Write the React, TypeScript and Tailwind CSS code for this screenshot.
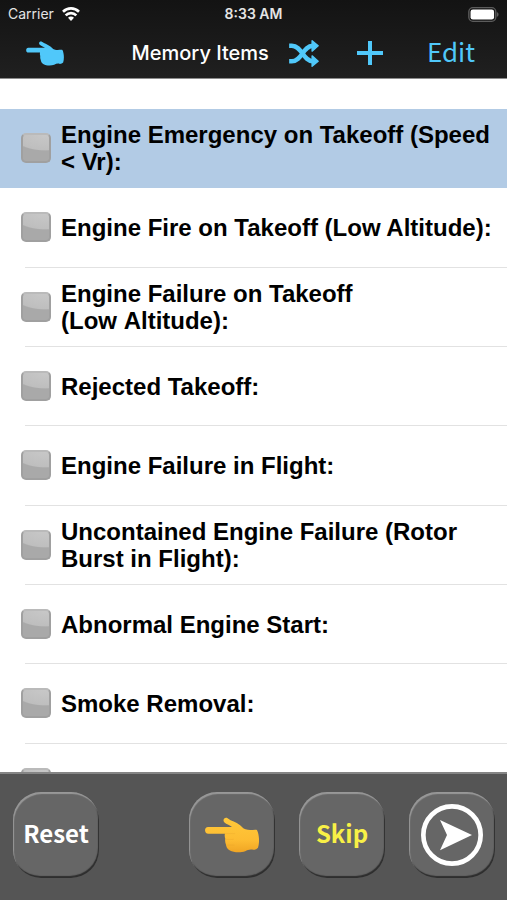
import { useState } from 'react'
import type { ReactNode } from 'react'

interface MemoryItem {
  id: string
  title: string
}

const ITEMS: MemoryItem[] = [
  { id: 'takeoff-emergency', title: 'Engine Emergency on Takeoff (Speed < Vr):' },
  { id: 'takeoff-fire', title: 'Engine Fire on Takeoff (Low Altitude):' },
  { id: 'takeoff-failure', title: 'Engine Failure on Takeoff (Low\u00a0Altitude):' },
  { id: 'rejected', title: 'Rejected Takeoff:' },
  { id: 'failure-flight', title: 'Engine Failure in Flight:' },
  { id: 'rotor-burst', title: 'Uncontained Engine Failure (Rotor Burst in Flight):' },
  { id: 'abnormal-start', title: 'Abnormal Engine Start:' },
  { id: 'smoke', title: 'Smoke Removal:' },
  { id: 'next', title: '' },
]

const TOOL_FONT = "font-['Noto_Sans_CJK_SC','Liberation_Sans',sans-serif]"
const CHECKBOX =
  'size-[30px] flex-none appearance-none rounded-[5px] border-2 border-[#a0a0a0] border-t-[#bababa] bg-[#a9a9a9] bg-[radial-gradient(ellipse_130%_66%_at_85%_-5%,#c8c8c8_0%,#bebebe_94%,transparent_100%)] checked:bg-[#4a90d9]'

function HandIcon({ className, fill, shaded }: { className: string; fill: string; shaded?: boolean }) {
  return (
    <svg viewBox="0 0 160 106" className={className} aria-hidden="true">
      <defs>
        <linearGradient id="hand-shade" x1="0" y1="0" x2="0" y2="1">
          <stop offset="0" stopColor="#ffc83a" />
          <stop offset="0.65" stopColor="#fdbc32" />
          <stop offset="1" stopColor="#f0a524" />
        </linearGradient>
      </defs>
      <path
        fill={fill}
        d="M9 29H80C70 22 56 19 55 11C54 3 61 0 67 3C78 12 92 14 103 23C108 27 112 33 120 36C133 41 145 36 154 38C161 52 162 76 157 91C153 95 149 97 143 97C134 94 127 97 119 101C106 106 84 105 74 99C65 94 63 87 62 81C60 76 59 69 60 64C58 59 58 53 59 49H10C-3 49 -3 29 9 29Z"
      />
      {shaded && (
        <path
          d="M59 49H88M62 66H84M66 83H86"
          fill="none"
          stroke="#e59d28"
          strokeWidth="2"
          strokeLinecap="round"
          opacity="0.4"
        />
      )}
    </svg>
  )
}

function ShuffleIcon() {
  return (
    <svg viewBox="0 0 88 80" className="h-[27px] w-[30px]" aria-hidden="true">
      <path d="M0 17H8C38 17 41 63 70 63M0 63H8C38 63 41 17 70 17" fill="none" stroke="currentColor" strokeWidth="13" />
      <path d="M68 2L86 17L68 33ZM68 47L86 63L68 78Z" fill="currentColor" stroke="currentColor" strokeWidth="4" strokeLinejoin="round" />
    </svg>
  )
}

function StatusBar() {
  return (
    <div className="grid h-7 grid-cols-3 items-center px-2 text-sm text-[#e4e4e4]">
      <div className="flex items-center gap-2">
        <span>Carrier</span>
        <svg viewBox="0 0 54 42" className="h-3.5 w-[18px]" fill="none" stroke="white" strokeWidth="8" aria-label="Wi-Fi">
          <path d="M3 14C17 1 37 1 51 14M11 25C20 16 34 16 43 25" />
          <path d="M18 32C23 27 31 27 36 32L27 42Z" fill="white" stroke="none" />
        </svg>
      </div>
      <div className="text-center font-semibold">8:33 AM</div>
      <svg viewBox="0 0 90 44" className="h-[15px] w-[31px] justify-self-end" aria-label="Battery full">
        <rect x="2" y="2" width="79" height="40" rx="12" fill="none" stroke="#5c5c5c" strokeWidth="4" />
        <rect x="7" y="7" width="69" height="30" rx="7" fill="white" />
        <path d="M84 15C91 18 91 26 84 29Z" fill="#5c5c5c" />
      </svg>
    </div>
  )
}

function ToolButton({ label, onClick, children }: { label: string; onClick?: () => void; children: ReactNode }) {
  return (
    <button
      aria-label={label}
      onClick={onClick}
      className={`${TOOL_FONT} flex size-[86px] flex-none items-center justify-center rounded-[28px] bg-[#666] text-2xl leading-8 font-bold shadow-[inset_1px_2px_1px_#989898,inset_-1px_-2px_1px_#2e2e2e]`}
    >
      {children}
    </button>
  )
}

export default function App() {
  const [current, setCurrent] = useState(0)
  const [done, setDone] = useState<string[]>([])

  const toggle = (id: string) => setDone((d) => (d.includes(id) ? d.filter((x) => x !== id) : [...d, id]))
  const step = (n: number) => setCurrent((c) => Math.min(ITEMS.length - 1, Math.max(0, c + n)))

  const reset = () => {
    setDone([])
    setCurrent(0)
  }

  return (
    <div className="flex h-screen flex-col bg-white font-['Inter',sans-serif]">
      <header className="flex-none border-b border-[#8c8c8c] bg-linear-to-b from-[#131313] to-[#202020]">
        <StatusBar />
        <nav className="flex h-[50px] items-center pr-8 pl-[26px] text-[#50c8fa]">
          <button aria-label="Back" className="mr-auto">
            <HandIcon className="h-[25px] w-[38px]" fill="#50c8fa" />
          </button>
          <h1 className="text-xl font-medium text-white">Memory Items</h1>
          <button aria-label="Shuffle" className="ml-5">
            <ShuffleIcon />
          </button>
          <button aria-label="Add" className="ml-[38px]">
            <svg viewBox="0 0 26 24" className="h-6 w-[26px]" stroke="currentColor" strokeWidth="4" aria-hidden="true">
              <path d="M0 12H26M13 0V24" />
            </svg>
          </button>
          <button className={`${TOOL_FONT} ml-11 pb-1 text-[26px] leading-9`}>Edit</button>
        </nav>
      </header>

      <main className="min-h-0 flex-1 overflow-hidden pt-[30px]">
        <ul className="grid h-[714px] auto-rows-fr font-['Liberation_Sans',Arial,sans-serif]">
          {ITEMS.map((item, i) => (
            <li key={item.id} className={`flex flex-col pl-[21px] ${i === current ? 'bg-[#b2cbe5]' : ''}`}>
              <div className="flex flex-1 items-center gap-2.5">
                <input
                  type="checkbox"
                  id={item.id}
                  aria-label={item.title || 'Next item'}
                  checked={done.includes(item.id)}
                  onChange={() => toggle(item.id)}
                  className={CHECKBOX}
                />
                <label htmlFor={item.id} className="text-2xl leading-[27px] font-bold text-black">
                  {item.title}
                </label>
              </div>
              <div className={`ml-1 h-px ${i === current ? '' : 'bg-[#e2e2e2]'}`} />
            </li>
          ))}
        </ul>
      </main>

      <footer className="flex h-32 flex-none gap-6 border-t-2 border-[#858585] bg-[#555] pt-[18px] pr-3 pl-[13px] text-white">
        <div className="mr-auto">
          <ToolButton label="Reset" onClick={reset}>
            <span className="pb-1">Reset</span>
          </ToolButton>
        </div>
        <ToolButton label="Previous" onClick={() => step(-1)}>
          <HandIcon className="h-9 w-[54px]" fill="url(#hand-shade)" shaded />
        </ToolButton>
        <ToolButton label="Skip" onClick={() => step(1)}>
          <span className="pb-1 text-[#f8f046]">Skip</span>
        </ToolButton>
        <ToolButton label="Next" onClick={() => step(1)}>
          <svg viewBox="0 0 186 186" className="size-[62px]" aria-hidden="true">
            <circle cx="93" cy="93" r="86" fill="none" stroke="white" strokeWidth="14" />
            <path d="M57 48L153 93L57 139L78 93Z" fill="white" />
          </svg>
        </ToolButton>
      </footer>
    </div>
  )
}
